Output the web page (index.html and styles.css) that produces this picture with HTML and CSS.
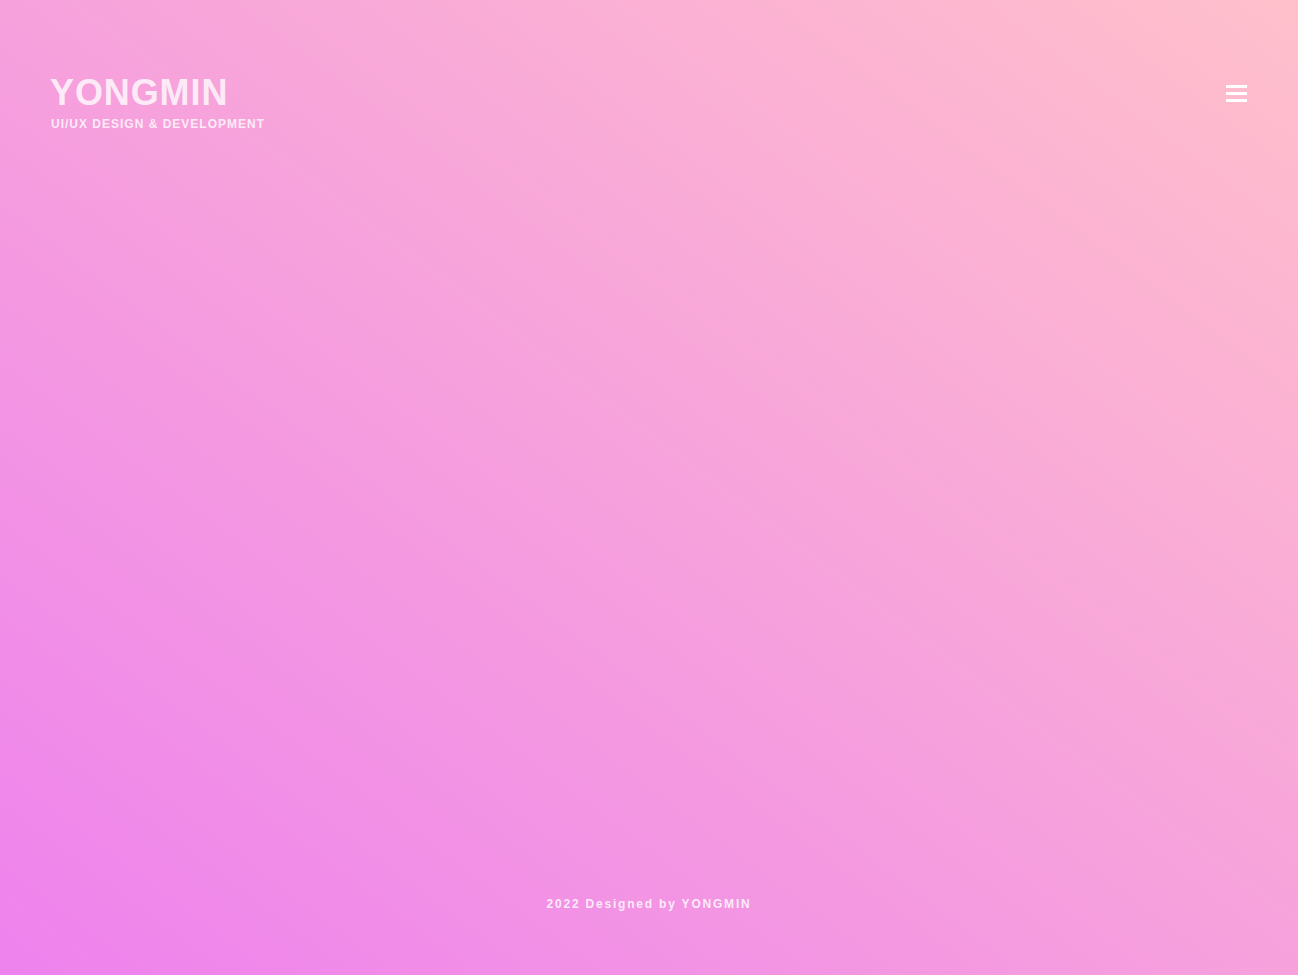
FILE: index.html
```html
<!DOCTYPE html>
<html lang="en">
<head>
<meta charset="utf-8">
<title>YONGMIN</title>
<link rel="stylesheet" href="styles.css">
</head>
<body>
<div class="page">
  <header class="header">
    <div class="brand">
      <h1 class="brand-title">YONGMIN</h1>
      <p class="brand-sub">UI/UX DESIGN &amp; DEVELOPMENT</p>
    </div>
    <button class="menu" aria-label="Menu">
      <span class="bar"></span>
      <span class="bar"></span>
      <span class="bar"></span>
    </button>
  </header>
  <main class="main"></main>
  <footer class="footer">2022 Designed by YONGMIN</footer>
</div>
</body>
</html>
```

FILE: styles.css
```css
html, body {
  margin: 0;
  padding: 0;
  height: 100%;
}
body {
  font-family: "Liberation Sans", Arial, sans-serif;
  background: linear-gradient(to top right, #ee82ee 0%, #ffc0cb 100%);
}
.page {
  min-height: 100vh;
  display: flex;
  flex-direction: column;
}
.header {
  display: flex;
  justify-content: space-between;
  align-items: flex-start;
  padding: 74px 51px 0 50px;
}
.brand {
  display: flex;
  flex-direction: column;
  gap: 7px;
}
.brand-title {
  margin: 0;
  font-size: 36px;
  line-height: 37px;
  font-weight: 700;
  letter-spacing: 0.9px;
  color: rgba(255, 255, 255, 0.8);
}
.brand-sub {
  margin: 0 0 0 1px;
  font-size: 12px;
  line-height: 12px;
  font-weight: 700;
  letter-spacing: 1px;
  color: rgba(255, 255, 255, 0.8);
}
.menu {
  margin-top: 11px;
  padding: 0;
  border: 0;
  background: none;
  width: 21px;
  display: flex;
  flex-direction: column;
  gap: 4px;
  cursor: pointer;
}
.bar {
  display: block;
  width: 21px;
  height: 3px;
  background: #ffffff;
}
.main {
  flex: 1;
}
.footer {
  text-align: center;
  font-size: 12px;
  line-height: 12px;
  font-weight: 700;
  letter-spacing: 1.8px;
  padding: 0 0 65px 0;
  color: rgba(255, 255, 255, 0.82);
}
```
